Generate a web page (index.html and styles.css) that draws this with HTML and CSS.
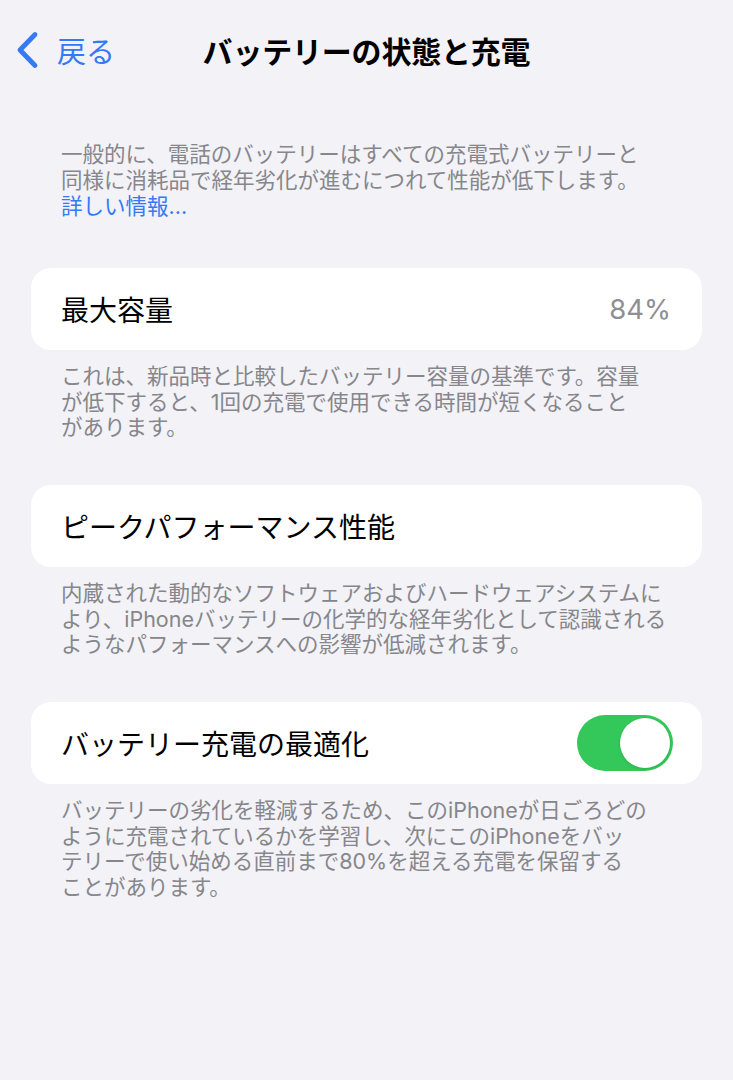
FILE: index.html
```html
<!DOCTYPE html>
<html lang="ja">
<head>
<meta charset="utf-8">
<title>バッテリーの状態と充電</title>
<link rel="stylesheet" href="styles.css">
</head>
<body>
<div class="screen">
  <header class="nav">
    <div class="back">
      <svg class="chev" width="24" height="38" viewBox="0 0 24 38" aria-hidden="true">
        <path d="M20 3.5 L5 19 L20 34.5" fill="none" stroke="#3579f6" stroke-width="4.8" stroke-linecap="round" stroke-linejoin="round"/>
      </svg>
      <span class="back-label">戻る</span>
    </div>
    <h1 class="title">バッテリーの状態と充電</h1>
    <div class="spacer"></div>
  </header>

  <p class="intro">一般的に、電話のバッテリーはすべての充電式バッテリーと<br>同様に消耗品で経年劣化が進むにつれて性能が低下します。<br><span class="link">詳しい情報...</span></p>

  <section class="group">
    <div class="card">
      <span class="label">最大容量</span>
      <span class="value">84%</span>
    </div>
    <p class="note">これは、新品時と比較したバッテリー容量の基準です。容量<br>が低下すると、1回の充電で使用できる時間が短くなること<br>があります。</p>
  </section>

  <section class="group">
    <div class="card">
      <span class="label">ピークパフォーマンス性能</span>
    </div>
    <p class="note">内蔵された動的なソフトウェアおよびハードウェアシステムに<br>より、iPhoneバッテリーの化学的な経年劣化として認識される<br>ようなパフォーマンスへの影響が低減されます。</p>
  </section>

  <section class="group">
    <div class="card">
      <span class="label">バッテリー充電の最適化</span>
      <span class="toggle"><span class="knob"></span></span>
    </div>
    <p class="note">バッテリーの劣化を軽減するため、このiPhoneが日ごろどの<br>ように充電されているかを学習し、次にこのiPhoneをバッ<br>テリーで使い始める直前まで80%を超える充電を保留する<br>ことがあります。</p>
  </section>
</div>
</body>
</html>
```

FILE: styles.css
```css
html, body {
  margin: 0;
  padding: 0;
  background: #f2f2f7;
}
body {
  font-family: "Inter", "Noto Sans CJK JP", sans-serif;
  color: #000;
  width: 733px;
  height: 1080px;
  overflow: hidden;
}
.screen {
  display: flex;
  flex-direction: column;
}
.nav {
  height: 100px;
  display: grid;
  grid-template-columns: 1fr auto 1fr;
  align-items: center;
}
.back {
  display: flex;
  align-items: center;
  padding-left: 15px;
  gap: 18px;
  color: #3579f6;
}
.chev {
  display: block;
}
.back-label {
  font-size: 29px;
  line-height: 36px;
  font-family: "Noto Sans CJK JP", sans-serif;
}
.title {
  margin: 0;
  font-size: 30px;
  font-weight: 700;
  line-height: 36px;
  font-family: "Noto Sans CJK JP", sans-serif;
  letter-spacing: -0.2px;
}
.intro {
  margin: 41px 0 0 61px;
  font-size: 21.5px;
  line-height: 26px;
  color: #86868b;
}
.link {
  color: #3579f6;
}
.group {
  margin: 0 31px 0 31px;
}
.intro + .group {
  margin-top: 49px;
}
.group + .group {
  margin-top: 44.5px;
}
.card {
  height: 82px;
  background: #fff;
  border-radius: 20px;
  display: flex;
  align-items: center;
  justify-content: space-between;
  padding: 0 29px 0 30px;
  box-sizing: border-box;
}
.label {
  font-size: 28px;
  font-family: "Noto Sans CJK JP", sans-serif;
  line-height: 36px;
}
.value {
  font-size: 27.5px;
  color: #8e8e93;
  line-height: 36px;
  margin-right: 2px;
}
.toggle {
  width: 96px;
  height: 56px;
  border-radius: 28px;
  background: #34c759;
  display: flex;
  align-items: center;
  justify-content: flex-end;
  padding: 3px;
  box-sizing: border-box;
}
.knob {
  width: 50px;
  height: 50px;
  border-radius: 50%;
  background: #fff;
  box-shadow: 0 1px 3px rgba(0,0,0,0.12);
}
.note {
  margin: 14px 0 0 30px;
  font-size: 21.5px;
  line-height: 25.5px;
  color: #86868b;
}
```
